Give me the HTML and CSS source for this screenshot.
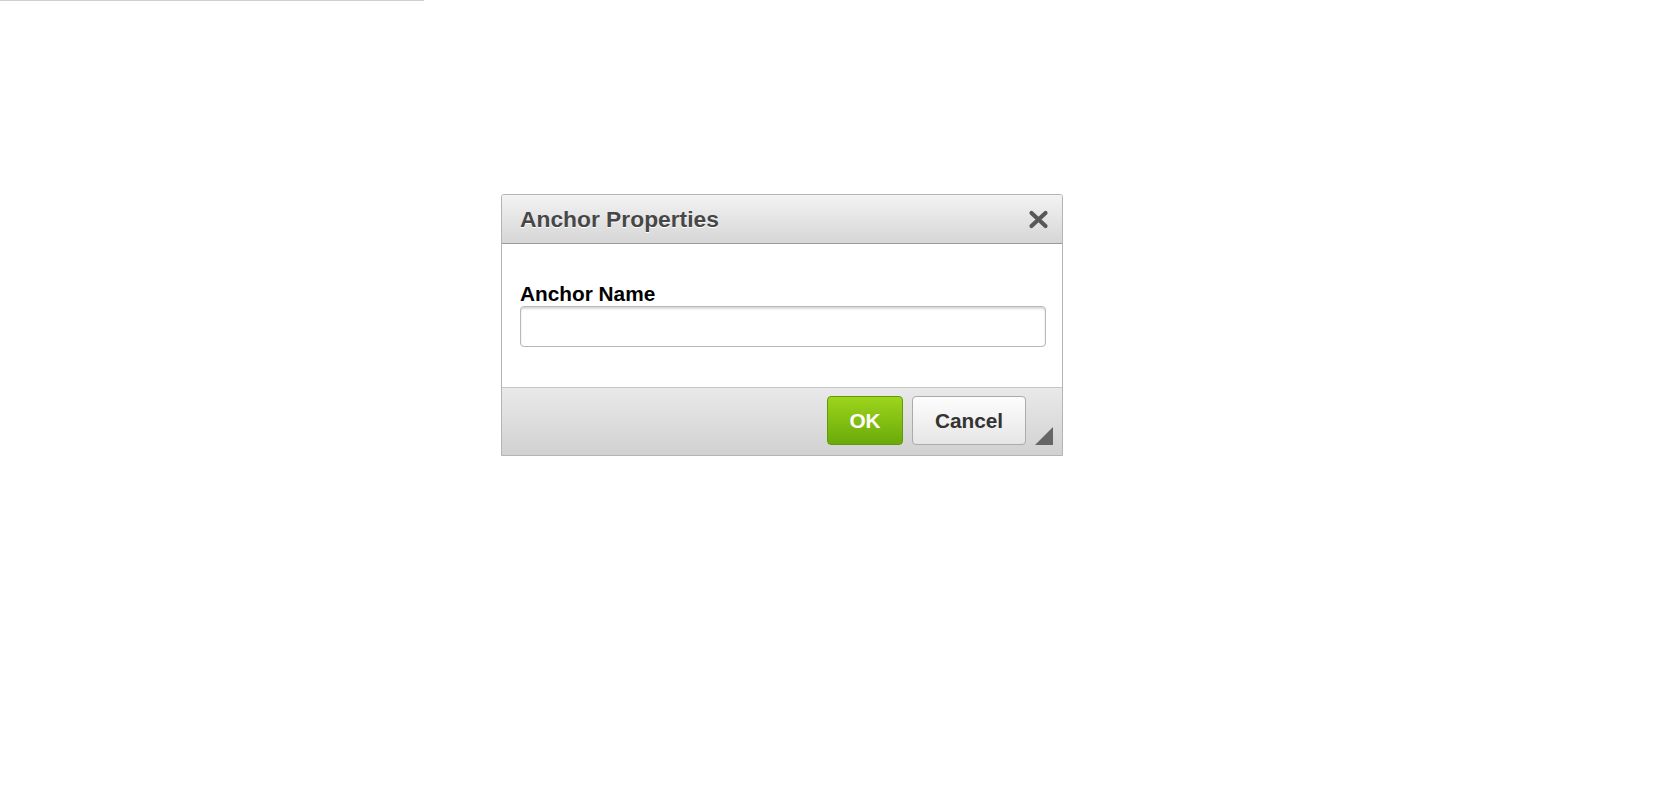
FILE: index.html
```html
<!DOCTYPE html>
<html lang="en">
<head>
    <meta charset="UTF-8">
    <meta name="viewport" content="width=device-width, initial-scale=1.0">
    <title>Anchor Properties</title>
    <link rel="stylesheet" href="styles.css">
</head>
<body>
    <div class="loading-bar"></div>

    <div class="dialog">
        <div class="dialog-header">
            <span class="dialog-title">Anchor Properties</span>
            <span class="dialog-close" title="Close">
                <svg width="21" height="19" viewBox="0 0 21 19">
                    <path d="M3.5 3 L17.5 16 M17.5 3 L3.5 16" stroke="#585858" stroke-width="4.2" stroke-linecap="round"/>
                </svg>
            </span>
        </div>
        <div class="dialog-body">
            <label class="field-label" for="anchorName">Anchor Name</label>
            <input class="field-input" type="text" id="anchorName">
        </div>
        <div class="dialog-footer">
            <button class="btn btn-ok">OK</button>
            <button class="btn btn-cancel">Cancel</button>
            <span class="resize-grip"></span>
        </div>
    </div>
</body>
</html>
```

FILE: styles.css
```css
body {
    margin: 0;
    padding: 0;
    background: #fff;
    font-family: "Liberation Sans", Arial, sans-serif;
}
.loading-bar {
    width: 424px;
    height: 1px;
    background: #cfcfcf;
}
.dialog {
    width: 560px;
    margin: 193px 0 0 501px;
    border: 1px solid #b4b4b4;
    border-radius: 3px 3px 0 0;
    background: #fff;
}
.dialog-header {
    height: 48px;
    display: flex;
    align-items: center;
    justify-content: space-between;
    padding: 0 13px 0 18px;
    background: linear-gradient(#f3f3f3, #d6d6d6);
    border-bottom: 1px solid #9a9a9a;
    border-radius: 3px 3px 0 0;
}
.dialog-title {
    font-size: 22.8px;
    font-weight: bold;
    color: #474747;
    text-shadow: 0 1px 0 #fff;
}
.dialog-close {
    display: flex;
    cursor: pointer;
    filter: blur(0.5px);
}
.dialog-body {
    padding: 38px 16px 40px 18px;
}
.field-label {
    display: block;
    font-size: 20.8px;
    line-height: 24px;
    font-weight: bold;
    color: #000;
}
.field-input {
    display: block;
    box-sizing: border-box;
    width: 100%;
    height: 41px;
    margin: 0;
    border: 1px solid #b8b8b8;
    border-radius: 4px;
    box-shadow: inset 0 2px 2px rgba(0, 0, 0, 0.15);
    font-size: 18px;
    padding: 0 8px;
}
.dialog-footer {
    display: flex;
    justify-content: flex-end;
    gap: 9px;
    padding: 8px 9px 10px 0;
    border-top: 1px solid #c6c6c6;
    background: linear-gradient(#e9e9e9, #d1d1d1);
}
.btn {
    height: 49px;
    margin: 0;
    box-sizing: border-box;
    font-family: "Liberation Sans", Arial, sans-serif;
    font-size: 20.8px;
    font-weight: bold;
    border-radius: 4px;
    cursor: pointer;
    padding: 0;
}
.btn-ok {
    width: 76px;
    color: #fff;
    background: linear-gradient(#9dd51c, #6aaa0a);
    border: 1px solid #5f9a0a;
}
.btn-cancel {
    width: 114px;
    color: #333;
    background: linear-gradient(#fdfdfd, #e6e6e6);
    border: 1px solid #ababab;
}
.resize-grip {
    align-self: flex-end;
    width: 0;
    height: 0;
    border-style: solid;
    border-width: 0 0 18px 18px;
    border-color: transparent transparent #666 transparent;
}
```
